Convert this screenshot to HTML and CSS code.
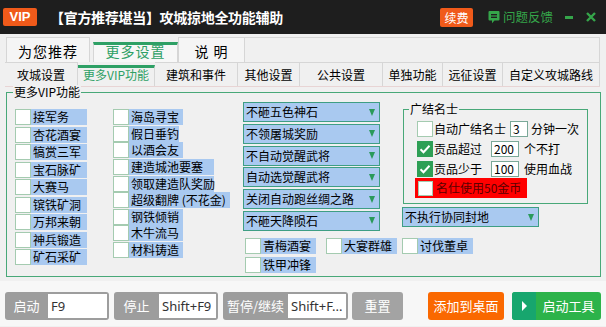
FILE: index.html
```html
<!DOCTYPE html>
<html lang="zh-CN">

<head>
  <meta charset="UTF-8" />
  <meta name="viewport" content="width=device-width, initial-scale=1.0" />
  <title>攻城掠地全功能辅助</title>
  <link rel="stylesheet" href="styles.css">
</head>

<body>
  <!-- 顶部标题栏 -->
  <div class="titlebar">
    <span class="vip">VIP</span>
    <span class="title">【官方推荐堪当】攻城掠地全功能辅助</span>
    <span class="renew">续费</span>
    <span class="feedback">
      <svg width="12" height="14" viewBox="0 0 12 14">
        <path d="M1.5 1h9a1 1 0 0 1 1 1v7.5a1 1 0 0 1-1 1H6.5L4 13.2V10.5H1.5a1 1 0 0 1-1-1V2a1 1 0 0 1 1-1z" fill="#35a54a" />
        <rect x="3" y="4" width="6" height="1.4" fill="#1e1e1e" />
        <rect x="3" y="6.6" width="6" height="1.4" fill="#1e1e1e" />
      </svg>
      问题反馈
    </span>
    <span class="win-min"></span>
    <svg class="win-close" width="10" height="10" viewBox="0 0 10 10">
      <path d="M1 1L9 9M9 1L1 9" stroke="#35a54a" stroke-width="2.4" />
    </svg>
  </div>

  <!-- 一级选项卡 -->
  <div class="tabs-main">
    <div class="tab">为您推荐</div>
    <div class="tab active">更多设置</div>
    <div class="tab">说 明</div>
    <div class="tab-rest"></div>
  </div>

  <!-- 二级选项卡 -->
  <div class="tabs-sub">
    <div class="tab">攻城设置</div>
    <div class="tab active">更多VIP功能</div>
    <div class="tab">建筑和事件</div>
    <div class="tab">其他设置</div>
    <div class="tab">公共设置</div>
    <div class="tab">单独功能</div>
    <div class="tab">远征设置</div>
    <div class="tab">自定义攻城路线</div>
  </div>

  <div class="vip-box">
    <span class="group-title">更多VIP功能</span>

    <div class="col-a">
      <span class="chk"><i class="box"></i>接军务</span>
      <span class="chk"><i class="box"></i>杏花酒宴</span>
      <span class="chk"><i class="box"></i>犒赏三军</span>
      <span class="chk"><i class="box"></i>宝石脉矿</span>
      <span class="chk"><i class="box"></i>大赛马</span>
      <span class="chk"><i class="box"></i>镔铁矿洞</span>
      <span class="chk"><i class="box"></i>万邦来朝</span>
      <span class="chk"><i class="box"></i>神兵锻造</span>
      <span class="chk"><i class="box"></i>矿石采矿</span>
    </div>

    <div class="col-b">
      <span class="chk"><i class="box"></i>海岛寻宝</span>
      <span class="chk short"><i class="box"></i>假日垂钓</span>
      <span class="chk"><i class="box"></i>以酒会友</span>
      <span class="chk long"><i class="box"></i>建造城池要塞</span>
      <span class="chk long"><i class="box"></i>领取建造队奖励</span>
      <span class="chk longer"><i class="box"></i>超级翻牌 (不花金)</span>
      <span class="chk"><i class="box"></i>钢铁倾销</span>
      <span class="chk"><i class="box"></i>木牛流马</span>
      <span class="chk"><i class="box"></i>材料铸造</span>
    </div>

    <div class="col-c">
      <div class="col-c-top">
        <div class="selects">
          <div class="select">不砸五色神石<i class="arrow"></i></div>
          <div class="select">不领屠城奖励<i class="arrow"></i></div>
          <div class="select">不自动觉醒武将<i class="arrow"></i></div>
          <div class="select">自动选觉醒武将<i class="arrow"></i></div>
          <div class="select">关闭自动跑丝绸之路<i class="arrow"></i></div>
          <div class="select">不砸天降陨石<i class="arrow"></i></div>
        </div>

        <div class="col-d">
          <div class="group">
            <span class="group-title">广结名士</span>
            <div class="row">
              <i class="box"></i><span class="txt">自动广结名士</span>
              <span class="num tiny">3</span><span class="unit">分钟一次</span>
            </div>
            <div class="row">
              <i class="box on"><svg width="14" height="14" viewBox="0 0 14 14"><path d="M2.5 7.2l3 3 6-6.4" fill="none" stroke="#fff" stroke-width="2" /></svg></i>
              <span class="txt">贡品超过</span>
              <span class="num">200</span><span class="unit gap">个不打</span>
            </div>
            <div class="row">
              <i class="box on"><svg width="14" height="14" viewBox="0 0 14 14"><path d="M2.5 7.2l3 3 6-6.4" fill="none" stroke="#fff" stroke-width="2" /></svg></i>
              <span class="txt">贡品少于</span>
              <span class="num">100</span><span class="unit gap">使用血战</span>
            </div>
            <div class="red-row"><i class="box"></i>名仕使用50金币</div>
          </div>
          <div class="select">不执行协同封地<i class="arrow"></i></div>
        </div>
      </div>

      <div class="extras">
        <span class="chk"><i class="box"></i>青梅酒宴</span>
        <span class="chk"><i class="box"></i>大宴群雄</span>
        <span class="chk"><i class="box"></i>讨伐董卓</span>
        <span class="chk"><i class="box"></i>铁甲冲锋</span>
      </div>
    </div>
  </div>

  <!-- 底部热键和按钮 -->
  <div class="footer">
    <div class="hotkey k1"><span class="hk-label">启动</span><span class="hk-input">F9</span></div>
    <div class="hotkey k2"><span class="hk-label">停止</span><span class="hk-input">Shift+F9</span></div>
    <div class="hotkey k3"><span class="hk-label">暂停/继续</span><span class="hk-input">Shift+F...</span></div>
    <div class="btn reset">重置</div>
    <div class="btn desk">添加到桌面</div>
    <div class="btn start"><span class="play"></span><span class="start-txt">启动工具</span></div>
  </div>
</body>

</html>
```

FILE: styles.css
```css
* {
  margin: 0;
  padding: 0;
  box-sizing: border-box;
}

body {
  width: 606px;
  height: 327px;
  overflow: hidden;
  background: #f0f0f0;
  font-family: "Noto Sans CJK SC", sans-serif;
  font-size: 12px;
  line-height: 16px;
  color: #000;
}

/* 标题栏 */
.titlebar {
  height: 34px;
  background: #1e1e1e;
  display: flex;
  align-items: center;
  padding: 0 10px 0 3px;
  color: #fff;
}

.titlebar .vip {
  width: 34px;
  height: 18px;
  background: #f05a1a;
  border-radius: 2px;
  font: bold 13px/18px "Liberation Sans", sans-serif;
  text-align: center;
}

.titlebar .title {
  margin-left: 13px;
  font-size: 14px;
  font-weight: bold;
  letter-spacing: -0.3px;
}

.titlebar .renew {
  margin-left: auto;
  width: 33px;
  height: 19px;
  background: #f05a1a;
  border-radius: 2px;
  line-height: 19px;
  text-align: center;
}

.titlebar .feedback {
  margin-left: 15px;
  display: flex;
  align-items: center;
  color: #35a54a;
  font-size: 12.5px;
}

.feedback svg {
  margin-right: 3px;
}

.win-min {
  margin-left: 12px;
  width: 8px;
  height: 3px;
  background: #35a54a;
}

.win-close {
  margin-left: 13px;
}

/* 一级选项卡 */
.tabs-main {
  display: flex;
  height: 25px;
  margin: 3px 6px 0 6px;
}

.tabs-main .tab {
  border: 1px solid #d6d6d6;
  border-bottom: none;
  background: #f5f5f5;
  text-align: center;
  font-size: 14px;
  line-height: 26px;
  letter-spacing: 1px;
}

.tabs-main .tab:nth-child(1) {
  width: 84px;
}

.tabs-main .tab:nth-child(2) {
  width: 85px;
  margin-left: 3px;
}

.tabs-main .tab:nth-child(3) {
  width: 67px;
}

.tabs-main .tab.active {
  margin-top: 5px;
  border-top: 3px solid #2ea065;
  line-height: 12px;
  color: #2ea065;
  background: #f7f7f7;
}

.tabs-main .tab-rest {
  flex: 1;
  border-top: 1px solid #d6d6d6;
  border-right: 1px solid #d6d6d6;
}

/* 二级选项卡 */
.tabs-sub {
  display: flex;
  height: 25px;
  margin: 0 6px 0 5px;
  border-bottom: 1px solid #e8d4d4;
}

.tabs-sub .tab {
  border-top: 1px solid #d6d6d6;
  border-right: 1px solid #d6d6d6;
  text-align: center;
  line-height: 23px;
}

.tabs-sub .tab.active {
  margin-top: 3px;
  border-top: 3px solid #2ea065;
  line-height: 13px;
  color: #2ea065;
}

.tabs-sub .tab:nth-child(1) { width: 73px; }
.tabs-sub .tab:nth-child(2) { width: 77px; }
.tabs-sub .tab:nth-child(3) { width: 83px; }
.tabs-sub .tab:nth-child(4) { width: 62px; }
.tabs-sub .tab:nth-child(5) { width: 83px; }
.tabs-sub .tab:nth-child(6) { width: 60px; }
.tabs-sub .tab:nth-child(7) { width: 60px; }
.tabs-sub .tab:nth-child(8) { flex: 1; }

/* 分组框 */
.vip-box {
  position: relative;
  display: flex;
  height: 185px;
  margin: 5px 5px 0 6px;
  padding: 9px 0 0 8px;
  border: 1px solid #48a878;
}

.group-title {
  position: absolute;
  top: -8px;
  left: 6px;
  padding: 0 1px;
  background: #f0f0f0;
  line-height: 14px;
}

/* 复选框 */
.chk {
  display: flex;
  height: 16px;
  background: #a9c9f0;
  white-space: nowrap;
}

.box {
  flex: none;
  display: flex;
  align-items: center;
  justify-content: center;
  width: 16px;
  height: 16px;
  margin-right: 2px;
  background: #fff;
  border: 1px solid #a4cbb0;
}

.box.on {
  background: #2e9f55;
  border-color: #2e9f55;
}

.col-a {
  display: flex;
  flex-direction: column;
  gap: 1.5px;
  width: 72px;
  margin-top: 7px;
}

.col-b {
  display: flex;
  flex-direction: column;
  align-items: flex-start;
  gap: 0.65px;
  width: 130px;
  margin: 7px 0 0 26px;
}

.col-b .chk {
  width: 70px;
}

.col-b .chk.short {
  width: 66px;
}

.col-b .chk.long {
  width: 101px;
}

.col-b .chk.longer {
  width: 117px;
}

/* 下拉框 */
.col-c-top {
  display: flex;
}

.selects {
  display: flex;
  flex-direction: column;
  gap: 1.8px;
}

.select {
  display: flex;
  align-items: center;
  justify-content: space-between;
  width: 137px;
  height: 20px;
  padding: 0 4px 0 2px;
  background: #a9c9f0;
  border: 1px solid #3e9e84;
  white-space: nowrap;
}

.arrow {
  width: 0;
  height: 0;
  border-left: 3.5px solid transparent;
  border-right: 3.5px solid transparent;
  border-top: 7px solid #2a9a5a;
}

.col-d {
  margin-left: 22px;
}

.group {
  position: relative;
  width: 185px;
  height: 95px;
  margin: 7px 0 0 1px;
  padding: 11px 0 0 13px;
  border: 1px solid #48a878;
}

.group .group-title {
  left: 5px;
}

.row {
  display: flex;
  align-items: center;
  height: 16px;
  margin-bottom: 4px;
  white-space: nowrap;
}

.row .box {
  margin-right: 1px;
}

.num {
  width: 28px;
  height: 16px;
  margin-left: 9px;
  padding-left: 2px;
  background: #fff;
  border: 1px solid #7aa898;
  line-height: 14px;
}

.num.tiny {
  width: 18px;
  margin-left: 4px;
}

.unit {
  margin-left: 3px;
}

.unit.gap {
  margin-left: 5px;
}

.red-row {
  display: flex;
  align-items: center;
  width: 112px;
  height: 20px;
  margin: -3px 0 0 -2px;
  padding-left: 3px;
  background: #ff0000;
  color: #5a0000;
  white-space: nowrap;
}

.red-row .box {
  width: 15px;
  height: 15px;
  margin-right: 3px;
}

.col-d .select {
  margin-top: 3px;
}

.extras {
  display: grid;
  grid-template-columns: 81px 76px 71px;
  row-gap: 3px;
  margin: 7px 0 0 2px;
}

.extras .chk {
  width: 71px;
}

/* 底部 */
.footer {
  display: flex;
  height: 45px;
  margin-top: 4px;
  padding: 11px 0 0 5px;
  background: #f7f7f7;
  color: #fff;
  font-size: 13px;
}

.hotkey {
  display: flex;
  height: 28px;
  padding: 2px 2px 2px 0;
  background: #9d9d9d;
  border-radius: 3px;
}

.hk-label {
  line-height: 24px;
  text-align: center;
}

.hk-input {
  flex: 1;
  padding-left: 3px;
  background: #fff;
  color: #333;
  font-family: "Noto Sans", sans-serif;
  line-height: 24px;
  white-space: nowrap;
  overflow: hidden;
}

.k1 {
  width: 104px;
}

.k1 .hk-label {
  width: 43px;
}

.k2 {
  width: 104px;
  margin-left: 5px;
}

.k2 .hk-label {
  width: 45px;
}

.k3 {
  width: 125px;
  margin-left: 5px;
}

.k3 .hk-label {
  width: 65px;
}

.btn {
  height: 28px;
  border-radius: 3px;
  line-height: 28px;
  text-align: center;
}

.reset {
  width: 51px;
  margin-left: 4px;
  background: #a3a3a3;
}

.desk {
  width: 76px;
  margin-left: 25px;
  background: #fa6800;
}

.start {
  display: flex;
  width: 89px;
  margin-left: 8px;
  overflow: hidden;
  background: #2cb34a;
}

.play {
  display: flex;
  align-items: center;
  justify-content: center;
  width: 24px;
  background: #17a66e;
}

.play::after {
  content: "";
  border-top: 5px solid transparent;
  border-bottom: 5px solid transparent;
  border-left: 5px solid #fff;
}

.start-txt {
  flex: 1;
}
```
